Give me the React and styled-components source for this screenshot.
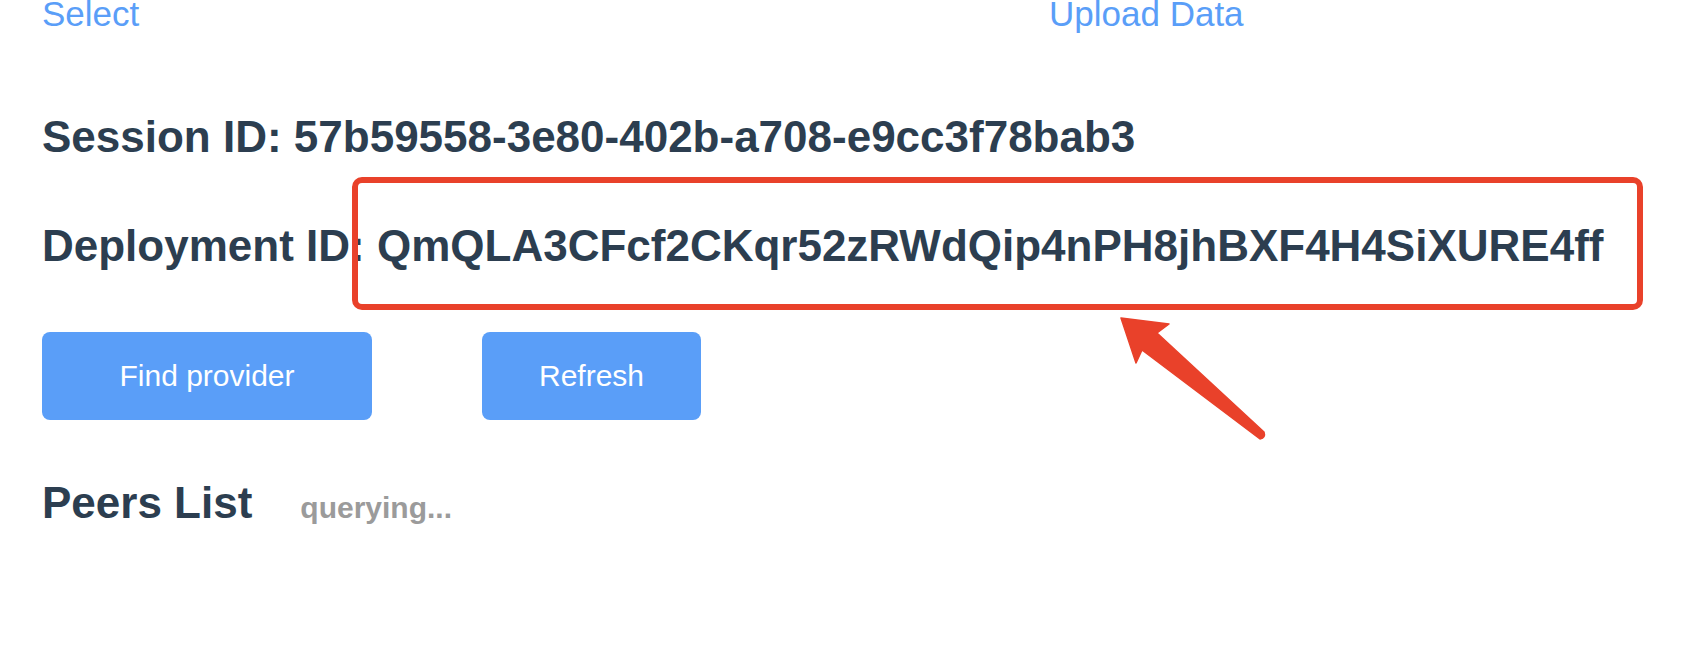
import styled, { createGlobalStyle } from "styled-components";

const GlobalStyle = createGlobalStyle`
  body {
    margin: 0;
    background: #ffffff;
    font-family: "Liberation Sans", Arial, Helvetica, sans-serif;
    color: #2c3e50;
  }
`;

/* PAGE */
const Page = styled.div`
  padding: 0 42px;
  display: flex;
  flex-direction: column;
  overflow: hidden;
  height: 666px;
  box-sizing: border-box;
`;

/* TOP LINKS */
const Nav = styled.nav`
  display: grid;
  grid-template-columns: 1007px auto;
  margin-top: -4px;
  font-size: 35px;
  line-height: 1;
`;

const NavLink = styled.a`
  color: #5a9ef8;
  text-decoration: none;
  cursor: pointer;
`;

/* ID LINES */
const InfoLine = styled.div`
  margin-top: ${(p) => p.$gap}px;
  font-size: 44px;
  font-weight: bold;
  line-height: 1;
  white-space: nowrap;
`;

const Value = styled.span`
  position: relative;
`;

/* red annotation box over the deployment id */
const Highlight = styled.span`
  position: absolute;
  left: -25px;
  right: -40px;
  top: -44px;
  bottom: -40px;
  border: 6px solid #e9412a;
  border-radius: 10px;
  pointer-events: none;
`;

const Arrow = styled.svg`
  position: absolute;
  left: 752px;
  top: 124px;
  width: 165px;
  height: 140px;
  overflow: visible;
`;

/* BUTTONS */
const Actions = styled.div`
  display: flex;
  gap: 110px;
  margin-top: 64px;
`;

const Button = styled.button`
  width: ${(p) => p.$width}px;
  height: 88px;
  border: none;
  border-radius: 8px;
  background: #5a9ef8;
  color: #ffffff;
  font-family: inherit;
  font-size: 30px;
  cursor: pointer;
`;

/* PEERS */
const PeersRow = styled.div`
  display: flex;
  align-items: baseline;
  gap: 48px;
  margin-top: 61px;
  line-height: 1;
`;

const PeersTitle = styled.h2`
  margin: 0;
  font-size: 44px;
  font-weight: bold;
  line-height: 1;
`;

const Status = styled.span`
  font-size: 30px;
  font-weight: bold;
  color: #9b9b9b;
`;

export default function App() {
  return (
    <>
      <GlobalStyle />
      <Page>
        <Nav>
          <NavLink>Select</NavLink>
          <NavLink>Upload Data</NavLink>
        </Nav>

        <InfoLine $gap={84}>
          Session ID: 57b59558-3e80-402b-a708-e9cc3f78bab3
        </InfoLine>

        <InfoLine $gap={65}>
          Deployment ID:{" "}
          <Value>
            QmQLA3CFcf2CKqr52zRWdQip4nPH8jhBXF4H4SiXURE4ff
            <Highlight>
              <Arrow viewBox="0 0 165 140">
                <path
                  d="M11 11 L59 17 L47 26 L154 125 Q156 131 150 132 L32 43 L26 56 Z"
                  fill="#e9412a"
                  stroke="#e9412a"
                  strokeWidth="1.5"
                  strokeLinejoin="round"
                />
              </Arrow>
            </Highlight>
          </Value>
        </InfoLine>

        <Actions>
          <Button $width={330}>Find provider</Button>
          <Button $width={219}>Refresh</Button>
        </Actions>

        <PeersRow>
          <PeersTitle>Peers List</PeersTitle>
          <Status>querying...</Status>
        </PeersRow>
      </Page>
    </>
  );
}
